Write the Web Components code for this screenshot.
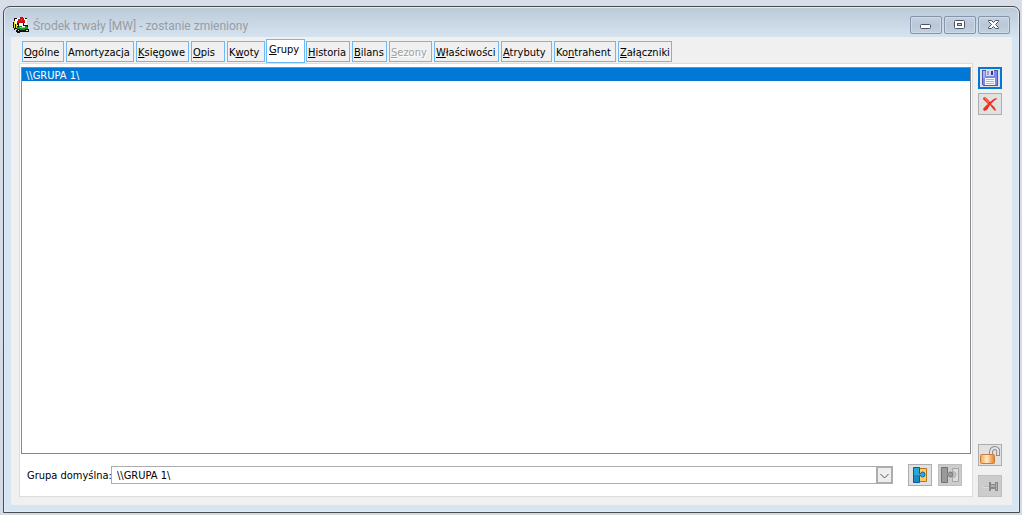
<!DOCTYPE html>
<html lang="pl">
<head>
<meta charset="utf-8">
<title>Środek trwały [MW] - zostanie zmieniony</title>
<style>
html,body{height:100%;margin:0}
body{display:flex;background:linear-gradient(#d8dee8,#d3dbe7);font:11px/14px "DejaVu Sans Condensed","Liberation Sans",sans-serif;color:#000}
u{text-underline-offset:1px;text-decoration-thickness:1px}
</style>
</head>
<body>
<app-window>
  <svg slot="icon" width="16" height="16" viewBox="0 0 16 16" shape-rendering="crispEdges" aria-hidden="true">
    <path fill="#fff" d="M2 1h12v9H2z"/><path fill="#111" d="M0 5h1v6H0zM1 1h1v3H1zM2 1h2v1H2zM12 1h2v1h-2zM4 5h2v3H4zM1 11h3v2H1zM2 7h1v4H2z"/>
    <path fill="#e8df28" d="M1 5h1v5H1zM3 7h1v4H3zM2 12h2v1H2z"/><path fill="#d00c12" d="M7 0h3v1h1v2h1v3H4V4h1V2h2z"/><path fill="#f04444" d="M8 2h1v2H8z"/>
    <path fill="#111" d="M5 6h1v4H5zM10 6h1v3h-1zM3 13h12v2H3z"/><path fill="#0b9c20" d="M4 10h2V9h3v1h3V8h3v5H4z"/><path fill="#7bdd70" d="M7 10h5v1H7z"/><path fill="#111" d="M4 9h1v1H4zM14 8h1v2h-1zM11 8h3v1h-3z"/>
    <path fill="#111" d="M4 12h3v4H4zM12 12h4v3h-4z"/><path fill="#ddd" d="M5 13h1v1H5zM13 13h2v1h-2z"/>
  </svg>
  <span slot="title">Środek trwały [MW] - zostanie zmieniony</span>
  <tab-strip slot="tabs">
    <tab-item><u>O</u>gólne</tab-item>
    <tab-item>Amortyzacja</tab-item>
    <tab-item><u>K</u>sięgowe</tab-item>
    <tab-item><u>O</u>pis</tab-item>
    <tab-item>K<u>w</u>oty</tab-item>
    <tab-item active><u>G</u>rupy</tab-item>
    <tab-item><u>H</u>istoria</tab-item>
    <tab-item><u>B</u>ilans</tab-item>
    <tab-item disabled><u>S</u>ezony</tab-item>
    <tab-item><u>W</u>łaściwości</tab-item>
    <tab-item><u>A</u>trybuty</tab-item>
    <tab-item>Ko<u>n</u>trahent</tab-item>
    <tab-item><u>Z</u>ałączniki</tab-item>
  </tab-strip>
  <group-panel slot="panel">
    <tool-button slot="actions" label="Dodaj grupę">
      <svg width="16" height="16" viewBox="0 0 16 16"><path fill="#ffcb70" stroke="#b8741b" d="M6.500 1.500h8v13h-8z"/><path fill="#28a9dc" stroke="#075f91" d="M1.500.5h6v6h1q.5-1.500 2-1.500a2.500 2.500 0 0 1 0 5q-1.500 0-2-1.500h-1v7h-6z"/><path fill="#178bc4" d="M2 8h5v7H2z"/></svg>
    </tool-button>
    <tool-button slot="actions" label="Usuń grupę" disabled>
      <svg width="20" height="16" viewBox="0 0 20 16"><path fill="#ddd" stroke="#a4a4a4" d="M12.500 1.500h6v13h-6v-4q3.500 0 3.500-3t-3.500-3z"/><path fill="#999" stroke="#737373" d="M1.500.5h6v6h1q.5-1.500 2-1.500a2.500 2.500 0 0 1 0 5q-1.500 0-2-1.500h-1v7h-6z"/></svg>
    </tool-button>
  </group-panel>
  <tool-button slot="top" label="Zapisz" primary>
    <svg width="16" height="16" viewBox="0 0 16 16" shape-rendering="crispEdges"><path fill="#5359a8" d="M0 0h15l1 1v15H1l-1-1z"/><path fill="#7d87e6" d="M1 1h14v14H1z"/><path fill="#a9b1f5" d="M1 1h2v7H1z"/><path fill="#d5d9e8" d="M4 0h8v6H4z"/><path fill="#333b88" d="M9 1h2v4H9z"/><path fill="#9ba3cf" d="M5 1h2v4H5z"/><path fill="#f7f7fb" d="M3 8h10v7H3z"/><path fill="#b4b4bc" d="M4 9h8v1H4zM4 11h8v1H4zM4 13h8v1H4z"/></svg>
  </tool-button>
  <tool-button slot="top" label="Anuluj">
    <svg width="16" height="16" viewBox="0 0 16 16"><path fill="#ef3020" d="M1 2 3 1q3 2 5 5 3-3 6-4l1 1q-4 2-6 5 3 2 5 6l-1 1q-3-3-5-6-2 3-3 5l-3 1-1-2q2-3 5-5-2-2-5-5z"/><path fill="#ff7042" d="m2 2 2 0 3 4-1 1z"/></svg>
  </tool-button>
  <tool-button slot="bottom" label="Odblokuj">
    <svg width="20" height="18" viewBox="0 0 20 18"><defs><linearGradient id="g"><stop stop-color="#ffa040"/><stop offset=".45" stop-color="#ffeccc"/><stop offset="1" stop-color="#f27a18"/></linearGradient></defs><path fill="none" stroke="#8d8d8d" stroke-width="4" d="M11 9V7q0-5 4-5t3 6v2"/><path fill="none" stroke="#e4e4e4" stroke-width="2" d="M11 9V7q0-5 4-5t3 6v1"/><rect x=".5" y="8.500" width="14" height="9" rx="1" fill="url(#g)" stroke="#c08040"/></svg>
  </tool-button>
  <tool-button slot="bottom" label="Przypnij" disabled>
    <svg width="20" height="16" viewBox="0 0 20 16" shape-rendering="crispEdges"><path fill="#ddd" d="M3 9h6v1H3z"/><path fill="#bbb" d="M4 8h5v1H4z"/><path fill="#888" d="M9 4h2v2h4V4h3v9h-3v-2h-4v2H9z"/><path fill="#b0b0b0" d="M11 7h4v2h-4zM16 5h1v7h-1z"/></svg>
  </tool-button>
</app-window>
<script>
class BaseElement extends HTMLElement{
  constructor(){super();this.attachShadow({mode:"open"}).innerHTML=this.template()}
}
customElements.define("app-window",class extends BaseElement{
  template(){return `<style>
  :host{flex:1;box-sizing:border-box;display:flex;flex-direction:column;margin:6px 2px 2px 3px;border:1px solid #4b4b4e;border-radius:7px 7px 0 0;background:linear-gradient(#bccad8,#d7e4f1 32px);box-shadow:inset 0 0 0 1px #e3ebf4;padding:0 7px 7px;min-width:0}
  header{display:flex;height:30px;align-items:center;gap:4px;padding:0 2px;box-sizing:border-box}
  h1{flex:1;margin:0;padding-top:7px;font:12px/16px Roboto,"Open Sans",sans-serif;color:#989da3;white-space:nowrap}
  .ico{padding-top:6px;height:16px}
  .win{display:flex;gap:2px;padding-top:6px}
  .win button{width:32px;height:18px;padding:0;border:1px solid #8593ab;border-radius:2px;background:linear-gradient(#c6d1df,#b9c7d8 50%,#c3d0e0);box-shadow:inset 0 0 0 1px #d0dbe8;display:grid;place-items:center}
  main{flex:1;display:flex;min-height:0;background:#f0f0f0;padding:2px 10px 8px 8px;gap:5px}
  .left{flex:1;display:flex;flex-direction:column;min-width:0}
  ::slotted(group-panel){flex:1}
  aside{display:flex;flex-direction:column;justify-content:space-between;padding-top:28px}
  aside div{display:flex;flex-direction:column;gap:4px}
  aside .low{gap:9px}
  </style><header><div class="ico"><slot name="icon"></slot></div><h1><slot name="title"></slot></h1>
  <div class="win">
  <button aria-label="Minimalizuj"><svg width="12" height="10"><rect x=".5" y="4.500" width="10" height="4" rx="1" fill="#fff" stroke="#4c5264"/></svg></button>
  <button aria-label="Maksymalizuj"><svg width="12" height="10"><rect x=".5" y=".5" width="10" height="8" rx="1" fill="#fff" stroke="#4c5264"/><rect x="3.500" y="3.500" width="4" height="2" fill="#c3cfdd" stroke="#4c5264"/></svg></button>
  <button aria-label="Zamknij"><svg width="12" height="10"><path d="M.5.500h3l2 2 2-2h3v1l-3 3 3 3v1h-3l-2-2-2 2h-3v-1l3-3-3-3z" fill="#fff" stroke="#4c5264"/></svg></button></div></header>
  <main><div class="left"><slot name="tabs"></slot><slot name="panel"></slot></div>
  <aside><div><slot name="top"></slot></div><div class="low"><slot name="bottom"></slot></div></aside></main>`}
});
customElements.define("tab-strip",class extends BaseElement{
  template(){return `<style>:host{display:grid;grid-template-columns:42px 68px 53px 34px 38px 37px 44px 35px 43px 65px 51px 62px 54px;column-gap:2px;height:24px;align-items:end;padding-left:3px}
  ::slotted([active]){margin:0 -1px}</style><slot></slot>`}
});
customElements.define("tab-item",class extends BaseElement{
  template(){return `<style>:host{display:block;min-width:0}
  button{display:block;width:100%;height:21px;margin:0 0 1px;box-sizing:border-box;border:1px solid #6db9f5;background:#f0f0f0;padding:2px 0 0 1px;font:inherit;color:inherit;text-align:left;white-space:nowrap}
  :host([active]) button{height:24px;background:#fff;margin:0;padding:0 0 3px 2px}
  :host([disabled]) button{color:#a0a0a0;text-shadow:1px 1px #fff}
  </style><button role="tab"><slot></slot></button>`}
  connectedCallback(){const b=this.shadowRoot.querySelector("button");b.disabled=this.hasAttribute("disabled");b.setAttribute("aria-selected",this.hasAttribute("active"))}
});
customElements.define("tool-button",class extends BaseElement{
  template(){return `<style>:host{display:block}
  button{display:grid;place-items:center;width:24px;height:22px;padding:0;box-sizing:border-box;border:1px solid #adadad;background:#e1e1e1}
  :host([primary]) button{border:2px solid #0078d7}
  :host([disabled]) button{background:#ccc;border-color:#bfbfbf}
  </style><button><slot></slot></button>`}
  connectedCallback(){const b=this.shadowRoot.querySelector("button");b.disabled=this.hasAttribute("disabled");b.setAttribute("aria-label",this.getAttribute("label"))}
});
customElements.define("group-panel",class extends BaseElement{
  template(){return `<style>
  :host{display:flex;flex-direction:column;box-sizing:border-box;background:#fff;border:1px solid #dcdcdc;padding:3px 1px 0;min-height:0}
  .list{flex:1;min-height:0;width:100%;box-sizing:border-box;border:1px solid #828790;border-radius:0;background:#fff;padding:0;font:inherit;outline:0;overflow:hidden}
  .list option{height:13px;min-height:13px;padding:1px 4px 0;line-height:13px;box-sizing:border-box}
  .list option:checked{background:#0078d7 linear-gradient(#0078d7,#0078d7);color:#fff;-webkit-text-fill-color:#fff}
  .row{display:flex;align-items:center;height:42px;padding:0 9px 0 6px}
  label{width:84px;padding-top:2px;white-space:nowrap}
  .combo{flex:1;position:relative;display:flex;margin-right:15px}
  .combo select{appearance:none;width:100%;height:18px;box-sizing:border-box;border:1px solid #adadad;border-radius:0;background:#fff;padding:2px 20px 0 5px;font:inherit;color:#000}
  .combo svg{position:absolute;right:0;top:0;pointer-events:none}
  .acts{display:flex;gap:6px}
  </style>
  <select class="list" size="20" aria-label="Grupy"><option selected>\\\\GRUPA 1\\</option></select>
  <div class="row"><label for="def">Grupa domyślna:</label>
  <div class="combo"><select id="def"><option>\\\\GRUPA 1\\</option></select><svg width="17" height="18"><rect x="1" y="1" width="15" height="16" fill="#eee" stroke="#adadad" stroke-width="2"/><path d="m4.500 8 4 4 4-4" fill="none" stroke="#555"/></svg></div>
  <div class="acts"><slot name="actions"></slot></div></div>`}
});
</script>
</body>
</html>
